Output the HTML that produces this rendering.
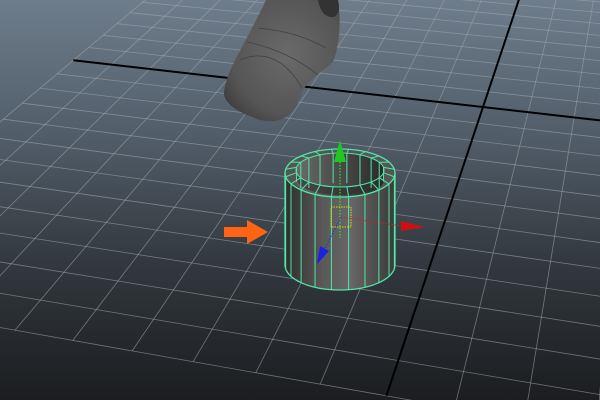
<!DOCTYPE html>
<html><head><meta charset="utf-8"><style>
html,body{margin:0;padding:0;width:600px;height:400px;overflow:hidden;background:#2a2f35}
svg{display:block;position:absolute;left:0;top:0}
</style></head><body>
<svg id="s" width="600" height="400" viewBox="0 0 600 400" xmlns="http://www.w3.org/2000/svg" style="overflow:hidden">
<defs>
<linearGradient id="bg" x1="0" y1="0" x2="0" y2="1">
<stop offset="0" stop-color="#6e7d8c"/><stop offset="0.35" stop-color="#505c68"/><stop offset="0.65" stop-color="#33393f"/><stop offset="1" stop-color="#1b1d20"/>
</linearGradient>
<linearGradient id="body" x1="0" y1="0" x2="1" y2="0">
<stop offset="0" stop-color="#2e2e2e"/><stop offset="0.35" stop-color="#5a5a5a"/><stop offset="0.6" stop-color="#666"/><stop offset="1" stop-color="#3a3a3a"/>
</linearGradient>
<linearGradient id="inner" x1="0" y1="0" x2="1" y2="0">
<stop offset="0" stop-color="#6a6a6a"/><stop offset="0.5" stop-color="#4a4a4a"/><stop offset="1" stop-color="#2a2a2a"/>
</linearGradient>
<radialGradient id="foot" cx="0.55" cy="0.45" r="0.7">
<stop offset="0" stop-color="#6a6a6a"/><stop offset="0.7" stop-color="#555"/><stop offset="1" stop-color="#3a3a3a"/>
</radialGradient>
</defs>
<rect width="600" height="400" fill="url(#bg)"/>
<g id="grid"></g>
<path d="M266,0 L338,0 C341,20 340,45 333,62 C322,72 308,80 302,92 C298,105 292,118 275,121 C262,122 255,118 250,116 C238,112 226,104 224,95 C224,80 234,62 243,45 C251,30 259,15 266,0 Z" fill="url(#foot)"/>
<path d="M318,0 L338,0 C340,8 339,14 334,17 C326,18 320,12 318,0 Z" fill="#333"/>
<path d="M258,28 C280,30 305,36 326,48 M247,42 C275,48 300,60 318,75 M240,60 C262,50 285,58 302,88" fill="none" stroke="#404040" stroke-width="0.7"/>
<g id="cyl">
<path d="M285,173 L285,265 A55,25 0 0 0 395,265 L395,173 Z" fill="url(#body)"/>
<ellipse cx="340" cy="173" rx="55" ry="24" fill="#555"/>
<path d="M296,170 A44,17 0 0 1 384,170 L384,180 A44,17 0 0 1 296,180 Z" fill="url(#inner)"/>
<path d="M296,170 A44,17 0 0 0 384,170 L384,178 A44,17 0 0 1 296,178 Z" fill="#2e2e2e" opacity="0.6"/>
<ellipse cx="340" cy="170" rx="44" ry="17" fill="none" stroke="#52e6a6" stroke-width="1"/>
<ellipse cx="340" cy="173" rx="55" ry="24" fill="none" stroke="#52e6a6" stroke-width="1.3"/>
<path d="M285,173 L285,265 A55,25 0 0 0 395,265 L395,173" fill="none" stroke="#52e6a6" stroke-width="1.3"/>
<g id="cl" stroke="#52e6a6" stroke-width="1" fill="none"></g>
</g>
<line x1="340" y1="162" x2="340" y2="238" stroke="#2f2" stroke-width="1" stroke-dasharray="1.5,1.5"/>
<path d="M340,140 L346,162 L334,162 Z" fill="#1ec81e"/>
<rect x="331" y="207" width="20" height="20" fill="none" stroke="#e6d400" stroke-width="1" stroke-dasharray="1.5,1"/>
<line x1="341" y1="217" x2="402" y2="226" stroke="#d02020" stroke-width="1" stroke-dasharray="1.5,1.5"/>
<path d="M401,221 L425,227 L401,231 Z" fill="#d01010"/>
<line x1="341" y1="217" x2="323" y2="252" stroke="#2030e0" stroke-width="1" stroke-dasharray="1.5,1.5"/>
<path d="M317,264 L320,246 L329,251 Z" fill="#1a22e0"/>
<path d="M224,227 L247,227 L247,220 L268,232 L247,244 L247,237 L224,237 Z" fill="#ff6414"/>
</svg>
<script>
(function(){
var NS="http://www.w3.org/2000/svg";
var O=[483,107],Vu=[-4380,-447],Vv=[665,-437],a=-0.0092,b=-0.0289;
function P(u,v){var d=1+u*a+v*b;return[(O[0]+u*a*Vu[0]+v*b*Vv[0])/d,(O[1]+u*a*Vu[1]+v*b*Vv[1])/d];}
var g=document.getElementById('grid');
function L(p,q,c,w,op){var l=document.createElementNS(NS,'line');l.setAttribute('x1',p[0].toFixed(1));l.setAttribute('y1',p[1].toFixed(1));l.setAttribute('x2',q[0].toFixed(1));l.setAttribute('y2',q[1].toFixed(1));l.setAttribute('stroke',c);l.setAttribute('stroke-width',w);if(op)l.setAttribute('stroke-opacity',op);g.appendChild(l);}
var U0=-10,U1=13,V0=-14,V1=12;
for(var u=U0;u<=U1;u++){if(u==0)continue;L(P(u,V0),P(u,V1),'#a4a8ac',0.8,0.6);}
for(var v=V0;v<=V1;v++){if(v==0)continue;L(P(U0,v),P(U1,v),'#a4a8ac',0.8,0.6);}
L(P(0,V0),P(0,V1),'#000',2);L(P(U0,0),P(U1,0),'#000',2);
var cl=document.getElementById('cl');
var n=20;
for(var i=0;i<n;i++){var t=(i+0.5)/n*Math.PI*2;var c=Math.cos(t),s=Math.sin(t);
 if(s>0){var x=340+55*c;var l=document.createElementNS(NS,'line');l.setAttribute('x1',x);l.setAttribute('y1',173+24*s);l.setAttribute('x2',x);l.setAttribute('y2',265+25*s);cl.appendChild(l);}
 var r=document.createElementNS(NS,'line');r.setAttribute('x1',340+55*c);r.setAttribute('y1',173+24*s);r.setAttribute('x2',340+44*c);r.setAttribute('y2',170+17*s);cl.appendChild(r);
 if(s<0){var xx=340+44*c;var ll=document.createElementNS(NS,'line');ll.setAttribute('x1',xx);ll.setAttribute('y1',170+17*s);ll.setAttribute('x2',xx);ll.setAttribute('y2',170+17*s+Math.min(30,-s*40+8));cl.appendChild(ll);}
}
})();
</script>
</body></html>
